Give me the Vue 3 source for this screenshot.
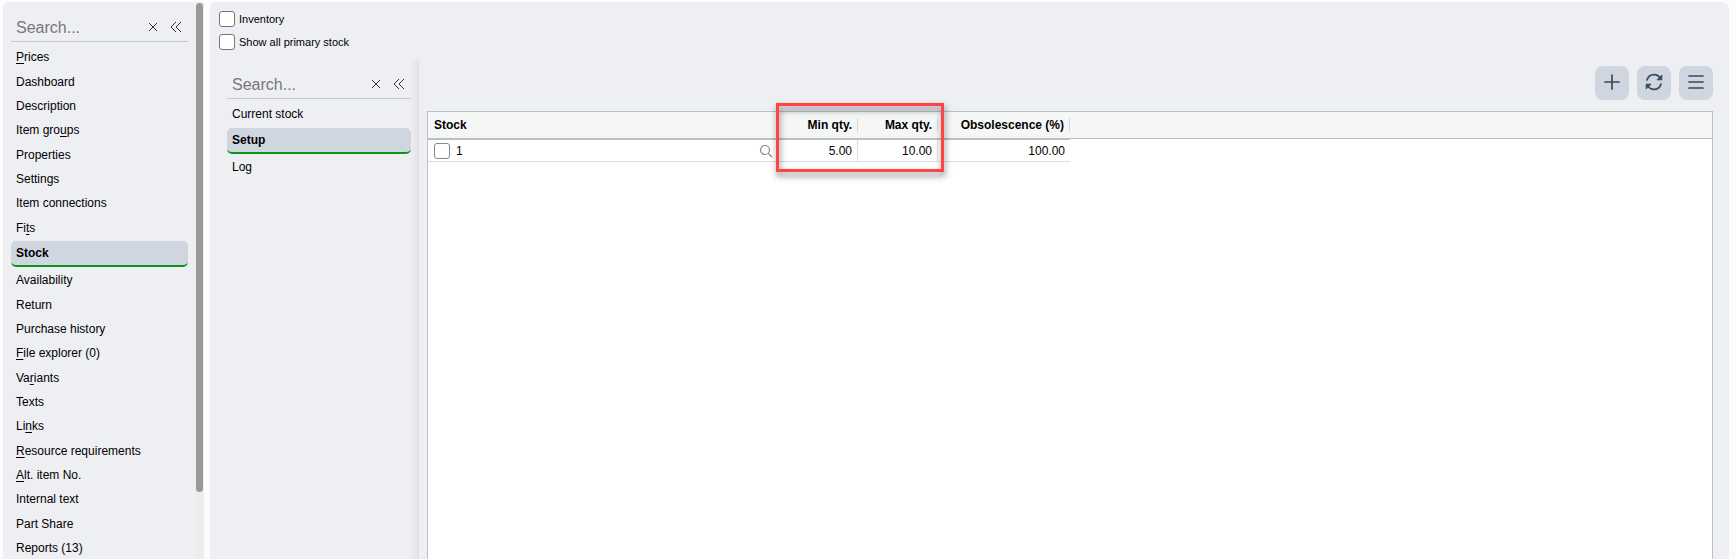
<template>
  <div class="app">
    <aside class="sidebar">
      <div class="sidebar-body">
        <div class="search">
          <input type="text" placeholder="Search..." aria-label="Search menu" />
          <button type="button" class="icon-btn" aria-label="Clear">
            <svg width="10" height="10" viewBox="0 0 10 10"><path d="M1 1l8 8M9 1L1 9" /></svg>
          </button>
          <button type="button" class="icon-btn" aria-label="Collapse">
            <svg width="12" height="12" viewBox="0 0 12 12"><path d="M6 1L1 6l5 5M11 1L6 6l5 5" /></svg>
          </button>
        </div>
        <nav class="menu">
          <a
            v-for="item in menu"
            :key="item.label"
            href="#"
            :class="['menu-item', { active: item.active }]"
            @click.prevent
          >{{ before(item) }}<u v-if="item.key">{{ item.key }}</u>{{ after(item) }}</a>
        </nav>
      </div>
      <div class="scrollbar" aria-hidden="true">
        <div class="scrollbar-thumb"></div>
      </div>
    </aside>

    <main class="main">
      <div class="options">
        <label class="option"><input v-model="inventory" type="checkbox" class="check" />Inventory</label>
        <label class="option"><input v-model="showAll" type="checkbox" class="check" />Show all primary stock</label>
      </div>

      <div class="content">
        <section class="submenu">
          <div class="search">
            <input type="text" placeholder="Search..." aria-label="Search stock menu" />
            <button type="button" class="icon-btn" aria-label="Clear">
              <svg width="10" height="10" viewBox="0 0 10 10"><path d="M1 1l8 8M9 1L1 9" /></svg>
            </button>
            <button type="button" class="icon-btn" aria-label="Collapse">
              <svg width="12" height="12" viewBox="0 0 12 12"><path d="M6 1L1 6l5 5M11 1L6 6l5 5" /></svg>
            </button>
          </div>
          <nav class="menu">
            <a
              v-for="item in submenu"
              :key="item.label"
              href="#"
              :class="['menu-item', { active: item.active }]"
              @click.prevent
            >{{ item.label }}</a>
          </nav>
        </section>

        <section class="panel">
          <div class="toolbar">
            <button type="button" class="tool" aria-label="Add">
              <svg width="18" height="18" viewBox="0 0 18 18"><path d="M9 2v14M2 9h14" /></svg>
            </button>
            <button type="button" class="tool" aria-label="Refresh">
              <svg width="18" height="18" viewBox="0 0 18 18">
                <path d="M2 7C3 3.6 5.8 1.6 9 1.6c2.8 0 5 1.4 6.6 4M16 11c-1 3.4-3.800 5.400-7 5.400-2.800 0-5-1.400-6.600-4" />
                <path class="solid" d="M16.800 2.400v4.400h-4.400zM1.200 15.600v-4.400h4.400z" />
              </svg>
            </button>
            <button type="button" class="tool" aria-label="Menu">
              <svg width="18" height="18" viewBox="0 0 18 18"><path d="M2 3h14M2 9h14M2 15h14" /></svg>
            </button>
          </div>

          <div class="grid">
            <table>
              <colgroup>
                <col class="col-stock" />
                <col class="col-qty" />
                <col class="col-qty" />
                <col class="col-obs" />
                <col />
              </colgroup>
              <thead>
                <tr>
                  <th>Stock</th>
                  <th class="num"><span>Min qty.</span></th>
                  <th class="num"><span>Max qty.</span></th>
                  <th class="num"><span>Obsolescence (%)</span></th>
                  <th></th>
                </tr>
              </thead>
              <tbody>
                <tr v-for="row in rows" :key="row.stock">
                  <td>
                    <div class="stock-cell">
                      <input type="checkbox" class="check" :aria-label="`Select stock ${row.stock}`" />
                      <span>{{ row.stock }}</span>
                      <button type="button" class="lookup" aria-label="Look up stock">
                        <svg width="14" height="14" viewBox="0 0 14 14">
                          <circle cx="6" cy="6" r="4.5" />
                          <path d="M9.3 9.3L13 13" />
                        </svg>
                      </button>
                    </div>
                  </td>
                  <td class="num line">{{ row.min }}</td>
                  <td class="num line">{{ row.max }}</td>
                  <td class="num">{{ row.obsolescence }}</td>
                  <td class="filler"></td>
                </tr>
              </tbody>
            </table>
            <div class="highlight"></div>
          </div>
        </section>
      </div>
    </main>
  </div>
</template>

<script setup>
import { ref } from 'vue'

const inventory = ref(false)
const showAll = ref(false)

// key is the underlined shortcut letter
const menu = [
  { label: 'Prices', key: 'P' },
  { label: 'Dashboard' },
  { label: 'Description' },
  { label: 'Item groups', key: 'u' },
  { label: 'Properties' },
  { label: 'Settings' },
  { label: 'Item connections' },
  { label: 'Fits', key: 't' },
  { label: 'Stock', active: true },
  { label: 'Availability' },
  { label: 'Return' },
  { label: 'Purchase history' },
  { label: 'File explorer (0)', key: 'F' },
  { label: 'Variants', key: 'r' },
  { label: 'Texts' },
  { label: 'Links', key: 'n' },
  { label: 'Resource requirements', key: 'R' },
  { label: 'Alt. item No.', key: 'A' },
  { label: 'Internal text' },
  { label: 'Part Share' },
  { label: 'Reports (13)' }
]

const submenu = [
  { label: 'Current stock' },
  { label: 'Setup', active: true },
  { label: 'Log' }
]

const rows = [{ stock: '1', min: '5.00', max: '10.00', obsolescence: '100.00' }]

const before = (item) => (item.key ? item.label.slice(0, item.label.indexOf(item.key)) : item.label)
const after = (item) => (item.key ? item.label.slice(item.label.indexOf(item.key) + 1) : '')
</script>

<style>
body {
  margin: 0;
  background: #fcfcfc;
}
</style>

<style scoped>
.app {
  display: flex;
  gap: 6px;
  box-sizing: border-box;
  height: 100vh;
  padding: 2px 7px 0 3px;
  overflow: hidden;
  font-family: "Liberation Sans", Arial, sans-serif;
  font-size: 12px;
  color: #000;
}

button {
  padding: 0;
  border: none;
  background: none;
  cursor: pointer;
}

svg {
  display: block;
  fill: none;
  stroke: #333;
}

/* Sidebar */
.sidebar {
  display: flex;
  flex: none;
  gap: 8px;
  width: 201px;
  border-radius: 6px 0 0 0;
  background: #eeeff3;
  overflow: hidden;
}

.sidebar-body {
  flex: 1;
  min-width: 0;
  padding: 10px 0 0 8px;
}

.scrollbar {
  flex: none;
  width: 8px;
  padding-top: 1px;
  background: #ededed;
}

.scrollbar-thumb {
  width: 7px;
  height: 88%;
  border-radius: 4px;
  background: #999;
}

.search {
  display: flex;
  align-items: center;
  height: 29px;
  padding: 0 6px 0 5px;
  border-bottom: 1px solid #c5c8ce;
}

.search input {
  flex: 1;
  min-width: 0;
  padding: 2px 0 0;
  border: none;
  outline: none;
  background: none;
  font: 16px "Liberation Sans", Arial, sans-serif;
}

.search input::placeholder {
  color: #777;
  opacity: 1;
}

.icon-btn {
  flex: none;
}

.icon-btn + .icon-btn {
  margin-left: 12px;
}

.menu {
  padding-top: 3px;
}

.menu-item {
  display: block;
  padding-left: 5px;
  line-height: 24px;
  color: #000;
  text-decoration: none;
  white-space: nowrap;
}

.menu-item:nth-child(3n + 1) {
  line-height: 25px;
}

.menu-item u {
  text-underline-offset: 2px;
}

.menu-item.active {
  margin: 1px 0;
  border-bottom: 2px solid #0a9618;
  border-radius: 5px;
  background: #cfd6e0;
  font-weight: bold;
}

/* Main area */
.main {
  display: flex;
  flex: 1;
  flex-direction: column;
  min-width: 0;
  border-radius: 6px 6px 0 0;
  background: #eeeff3;
}

.options {
  display: flex;
  flex-direction: column;
  gap: 7px;
  padding: 9px 9px 10px;
}

.option {
  display: flex;
  align-items: center;
  gap: 4px;
  font-size: 11px;
  line-height: 16px;
}

.check {
  flex: none;
  appearance: none;
  box-sizing: border-box;
  width: 16px;
  height: 16px;
  margin: 0;
  border: 1px solid #767676;
  border-radius: 3px;
  background: #fff;
}

.check:checked {
  background: #0a9618;
}

.content {
  display: flex;
  flex: 1;
  min-height: 0;
}

.submenu {
  flex: none;
  box-sizing: border-box;
  width: 209px;
  padding: 9px 7px 0 17px;
  border-right: 1px solid #dcdee2;
  background: linear-gradient(to left, #e3e4e8, #eeeff3 8px);
}

.panel {
  display: flex;
  flex: 1;
  flex-direction: column;
  gap: 11px;
  min-width: 0;
  padding: 6px 16px 0 8px;
}

.toolbar {
  display: flex;
  justify-content: flex-end;
  gap: 8px;
}

.tool {
  display: flex;
  align-items: center;
  justify-content: center;
  box-sizing: border-box;
  width: 34px;
  height: 34px;
  padding-bottom: 2px;
  border-radius: 8px;
  background: #cfd6e0;
}

.tool svg {
  stroke: #3b475c;
  stroke-width: 1.7;
  stroke-linecap: round;
}

.tool .solid {
  fill: #3b475c;
  stroke-width: 1;
  stroke-linejoin: round;
}

/* Stock table */
.grid {
  position: relative;
  flex: 1;
  border: 1px solid #bcc0c5;
  border-bottom: none;
  background: #fff;
}

table {
  width: 100%;
  border-spacing: 0;
  table-layout: fixed;
}

.col-stock {
  width: 350px;
}

.col-qty {
  width: 80px;
}

.col-obs {
  width: 132px;
}

th,
td {
  box-sizing: border-box;
  padding: 0 5px 0 6px;
  text-align: left;
  white-space: nowrap;
}

th {
  height: 27px;
  border-bottom: 1px solid #bcc0c5;
  background: #f5f7f6;
}

td {
  height: 23px;
  padding-top: 1px;
  border-top: 1px solid #bcc0c5;
  border-bottom: 1px solid #ddd;
}

th.num {
  padding-right: 0;
}

th.num span {
  display: block;
  padding-right: 5px;
  border-right: 1px solid #d5d7d9;
}

.num {
  text-align: right;
}

td.line {
  border-right: 1px solid #ddd;
}

td.filler {
  border: none;
}

.stock-cell {
  display: flex;
  align-items: center;
  gap: 6px;
}

.stock-cell .check {
  border-color: #7f8c8d;
}

.lookup {
  margin-left: auto;
}

.lookup svg {
  stroke: #888;
  stroke-width: 1.2;
}

/* Frame over the quantity columns */
.highlight {
  position: absolute;
  top: -9px;
  left: 348px;
  box-sizing: border-box;
  width: 168px;
  height: 69px;
  border: 3px solid #ff4444;
  filter: drop-shadow(1px 4px 3px rgba(0, 0, 0, 0.5));
  pointer-events: none;
}
</style>
